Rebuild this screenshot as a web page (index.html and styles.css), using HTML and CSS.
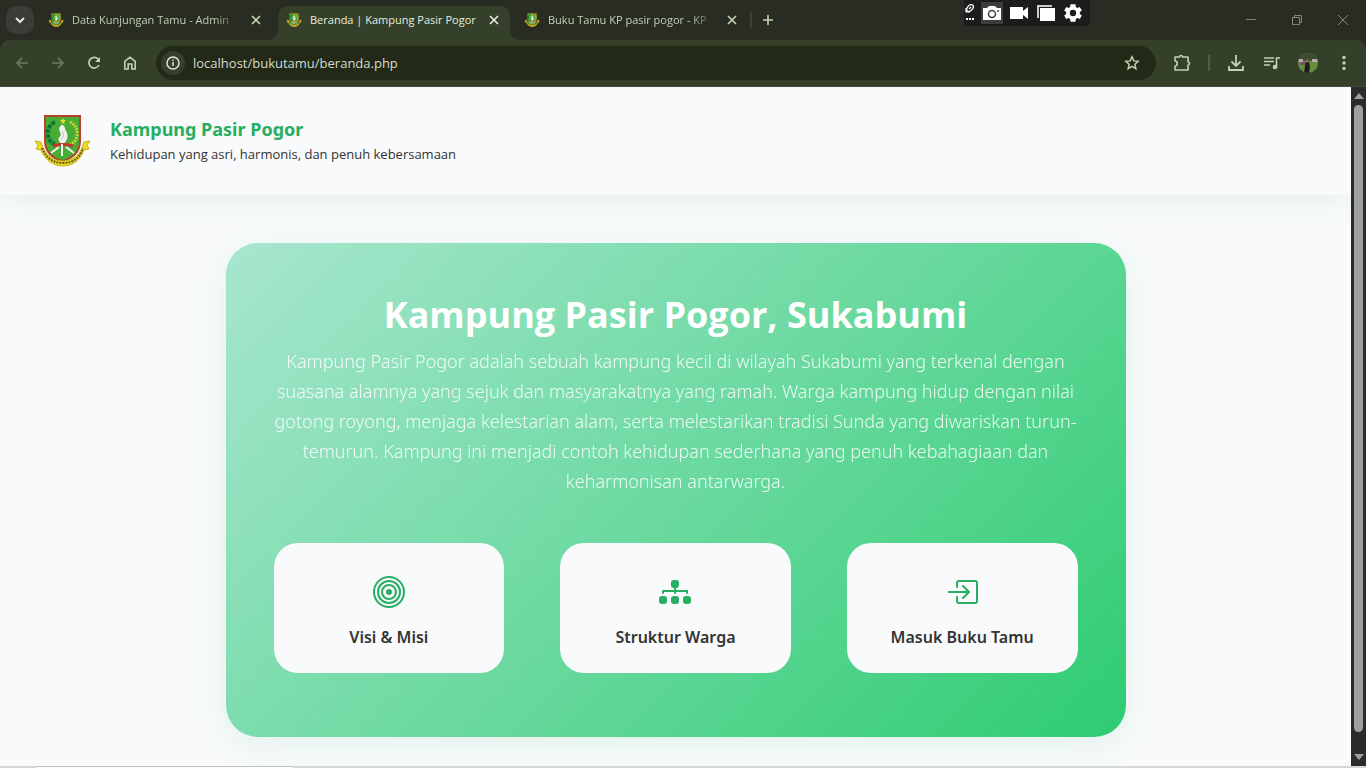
FILE: index.html
```
<!DOCTYPE html>
<html lang="id">
<head>
    <meta charset="UTF-8">
    <meta name="viewport" content="width=device-width, initial-scale=1.0">
    <title>Beranda | Kampung Pasir Pogor</title>
    <link rel="stylesheet" href="styles.css">
</head>
<body>
    <!-- shared emblem -->
    <svg class="sprite" width="0" height="0" aria-hidden="true">
        <symbol id="emblem" viewBox="0 0 60 60">
            <path d="M13 5h35v25c0 11-8 18-17.500 20C21 48 13 41 13 30z" fill="#49ac35" stroke="#b8402c" stroke-width="2"/>
            <path d="M23 11c-6 3-8 8-7 14 1 4 3 7 7 8" fill="none" stroke="#12733a" stroke-width="4" stroke-dasharray="4 1"/>
            <path d="M38 11c6 3 8 8 7 14-1 4-3 7-7 8" fill="none" stroke="#d8cf35" stroke-width="3" stroke-dasharray="2 1"/>
            <path d="M31 7l1 2h2l-2 2 1 2-2-1-2 1 1-2-2-2h2z" fill="#f4dd26"/>
            <path d="M30 14c3 1 2 4 4 7 2 4 1 8-2 11h-3c-2-2-3-4-1-6 2-2 1-3 0-6-1-2 0-5 2-6z" fill="#f2f2f2" stroke="#f2f2f2" stroke-width="1"/>
            <path d="M30 20c2 3 2 6-1 9" fill="none" stroke="#b7bdb7" stroke-width="1"/>
            <path d="M21 35c5-2 15-2 20 0" fill="none" stroke="#c4342b" stroke-width="3"/>
            <path d="M30 33v12M27 36l-8 6M34 36l8 6" stroke="#f4f4f4" stroke-width="2"/>
            <path d="M3 30l6 1c3 12 11 19 22 19s18-7 21-19l6-1-3 4 2 4-5 1c-4 10-11 16-21 16S13 49 9 39l-5-1 2-4z" fill="#f0dd1f" stroke="#c9ae1c" stroke-width="1"/>
            <path d="M10 37c4 10 11 15 21 15s17-5 20-15" fill="none" stroke="#61581a" stroke-width="2" stroke-dasharray="2 1"/>
        </symbol>
    </svg>

    <div class="tab-bar">
        <button class="tab-search" aria-label="Cari tab">
            <svg width="16" height="16" viewBox="0 0 16 16"><path d="M4 6l4 4 4-4" fill="none" stroke="#e4e9dc" stroke-width="2"/></svg>
        </button>
        <div class="tab">
            <svg class="tab-icon"><use href="#emblem"/></svg>
            <span class="tab-title">Data Kunjungan Tamu - Admin</span>
            <button class="tab-close" aria-label="Tutup"><svg width="10" height="10" viewBox="0 0 10 10"><path d="M1 1l8 8M9 1l-8 8" stroke="currentColor" stroke-width="1.700"/></svg></button>
        </div>
        <div class="tab active">
            <svg class="tab-icon"><use href="#emblem"/></svg>
            <span class="tab-title">Beranda | Kampung Pasir Pogor</span>
            <button class="tab-close" aria-label="Tutup"><svg width="10" height="10" viewBox="0 0 10 10"><path d="M1 1l8 8M9 1l-8 8" stroke="currentColor" stroke-width="1.700"/></svg></button>
        </div>
        <div class="tab">
            <svg class="tab-icon"><use href="#emblem"/></svg>
            <span class="tab-title">Buku Tamu KP pasir pogor - KP</span>
            <button class="tab-close" aria-label="Tutup"><svg width="10" height="10" viewBox="0 0 10 10"><path d="M1 1l8 8M9 1l-8 8" stroke="currentColor" stroke-width="1.700"/></svg></button>
        </div>
        <span class="tab-divider"></span>
        <button class="new-tab" aria-label="Tab baru"><svg width="12" height="12" viewBox="0 0 12 12"><path d="M6 1v10M1 6h10" stroke="currentColor" stroke-width="1.600"/></svg></button>

        <div class="window-controls">
            <button aria-label="Minimize"><svg width="12" height="12" viewBox="0 0 12 12"><path d="M1 5.500h10" stroke="currentColor"/></svg></button>
            <button aria-label="Restore"><svg width="12" height="12" viewBox="0 0 12 12"><path d="M1.500 3.500h7v7h-7zM3.500 3.500v-2h7v7h-2" fill="none" stroke="currentColor"/></svg></button>
            <button aria-label="Close"><svg width="12" height="12" viewBox="0 0 12 12"><path d="M1 1l10 10M11 1L1 11" stroke="currentColor"/></svg></button>
        </div>

        <div class="recorder">
            <svg width="12" height="20" viewBox="0 0 12 20"><ellipse cx="6" cy="5" rx="2.500" ry="4" transform="rotate(40 6 5)" fill="none" stroke="#fff" stroke-width="1.300"/><path d="M2 5v4h4M5 6l2-2" fill="none" stroke="#fff" stroke-width="1.200"/><path d="M2 15h2v2H2zM5 15h2v2H5zM8 15h2v2H8z" fill="#fff"/></svg>
            <button class="selected" aria-label="Kamera"><svg width="20" height="20" viewBox="0 0 20 20"><path d="M1 5h4l2-2h6l2 2h4v12H1z" fill="#fff"/><circle cx="10" cy="11" r="3.500" fill="#fff" stroke="#3d3d3d" stroke-width="1.500"/><circle cx="16" cy="8" r="1" fill="#3d3d3d"/></svg></button>
            <button aria-label="Video"><svg width="20" height="20" viewBox="0 0 20 20"><path d="M1 4h13v4l5-4v12l-5-4v4H1z" fill="#fff"/></svg></button>
            <button aria-label="Jendela"><svg width="20" height="20" viewBox="0 0 20 20"><path d="M2 15V3h14" fill="none" stroke="#ccc" stroke-width="2"/><path d="M4 5h15v13H4z" fill="#fff"/></svg></button>
            <button aria-label="Setelan"><svg width="22" height="22" viewBox="0 0 24 24"><path fill="#fff" d="M19.400 13a7.500 7.500 0 0 0 0-2l2.200-1.700-2.200-3.800-2.600 1a7.500 7.500 0 0 0-1.700-1L14.700 2.500H9.300l-.4 3a7.500 7.500 0 0 0-1.700 1l-2.600-1-2.200 3.800L4.600 11a7.500 7.500 0 0 0 0 2l-2.200 1.700 2.200 3.800 2.600-1a7.500 7.500 0 0 0 1.700 1l.4 3h5.400l.4-3a7.500 7.500 0 0 0 1.700-1l2.600 1 2.200-3.800zM12 15.500a3.500 3.500 0 1 1 0-7 3.500 3.500 0 0 1 0 7z"/></svg></button>
        </div>
    </div>

    <div class="toolbar-wrap">
        <div class="toolbar">
            <button class="disabled" aria-label="Kembali"><svg width="16" height="16" viewBox="0 0 16 16"><path d="M14 8H3M8 3L3 8l5 5" fill="none" stroke="currentColor" stroke-width="1.600"/></svg></button>
            <button class="disabled" aria-label="Maju"><svg width="16" height="16" viewBox="0 0 16 16"><path d="M2 8h11M8 3l5 5-5 5" fill="none" stroke="currentColor" stroke-width="1.600"/></svg></button>
            <button aria-label="Muat ulang"><svg width="16" height="16" viewBox="0 0 16 16"><path d="M13 10a5.300 5.300 0 1 1-1-6l1.500 1.500" fill="none" stroke="currentColor" stroke-width="1.700"/><path d="M14 2v5H9z" fill="currentColor"/></svg></button>
            <button aria-label="Beranda"><svg width="16" height="16" viewBox="0 0 16 16"><path d="M2.800 14V6.500L8 2.200l5.200 4.300V14H9.800V9H6.200v5z" fill="none" stroke="currentColor" stroke-width="1.600"/></svg></button>

            <div class="address">
                <button class="site-info" aria-label="Info situs"><svg width="16" height="16" viewBox="0 0 16 16"><circle cx="8" cy="8" r="6" fill="none" stroke="currentColor" stroke-width="1.500"/><path d="M8 7v4M8 4.500V6" stroke="currentColor" stroke-width="1.500"/></svg></button>
                <input type="text" value="localhost/bukutamu/beranda.php" aria-label="Alamat">
                <button aria-label="Bookmark"><svg width="16" height="16" viewBox="0 0 16 16"><path d="M8 1.800l1.800 4.100 4.500.4-3.400 3 1 4.400L8 11.400l-3.900 2.300 1-4.400-3.400-3 4.500-.4z" fill="none" stroke="currentColor" stroke-width="1.500"/></svg></button>
            </div>

            <div class="actions">
                <button aria-label="Ekstensi"><svg width="18" height="18" viewBox="0 0 18 18"><path d="M2 3h4.500a1.500 1.500 0 0 1 3 0H15v5a1.500 1.500 0 0 1 0 3v5H2v-4c3 0 3-5 0-5z" fill="none" stroke="currentColor" stroke-width="1.600" stroke-linejoin="round"/></svg></button>
                <span class="toolbar-divider"></span>
                <button aria-label="Unduhan"><svg width="18" height="18" viewBox="0 0 18 18"><path d="M9 1v11M4.500 7.500L9 12l4.500-4.500M2 12v4h14v-4" fill="none" stroke="currentColor" stroke-width="1.800"/></svg></button>
                <button aria-label="Kontrol media"><svg width="16" height="16" viewBox="0 0 16 16"><path d="M0 3h10M0 6.500h10M0 10h6M12.500 12V3H16" fill="none" stroke="currentColor" stroke-width="1.600"/><circle cx="11" cy="12" r="2.300" fill="currentColor"/></svg></button>
                <button aria-label="Profil">
                    <svg width="20" height="20" viewBox="0 0 20 20">
                        <clipPath id="round"><circle cx="10" cy="10" r="10"/></clipPath>
                        <g clip-path="url(#round)">
                            <path d="M0 0h20v20H0z" fill="#68903c"/>
                            <path d="M0 0h20v8H0z" fill="#3e4b30"/>
                            <path d="M0 6h5v3H0zM14 6h6v3h-6z" fill="#b5adad"/>
                            <path d="M2 9h6v3H2z" fill="#705760"/>
                            <path d="M8 8l3 1 1 5-1 6H6l1-7z" fill="#211a20"/>
                            <circle cx="9" cy="8" r="1.500" fill="#a2715d"/>
                        </g>
                    </svg>
                </button>
                <button aria-label="Menu"><svg width="16" height="16" viewBox="0 0 16 16" fill="currentColor"><circle cx="8" cy="2.500" r="1.700"/><circle cx="8" cy="8" r="1.700"/><circle cx="8" cy="13.500" r="1.700"/></svg></button>
            </div>
        </div>
    </div>

    <div class="viewport">
        <div class="page">
            <header class="site-header">
                <svg class="logo" role="img" aria-label="Logo"><use href="#emblem"/></svg>
                <div>
                    <div class="site-name">Kampung Pasir Pogor</div>
                    <div class="site-tagline">Kehidupan yang asri, harmonis, dan penuh kebersamaan</div>
                </div>
            </header>

            <main class="hero">
                <h1>Kampung Pasir Pogor, Sukabumi</h1>
                <p>Kampung Pasir Pogor adalah sebuah kampung kecil di wilayah Sukabumi yang terkenal dengan suasana alamnya yang sejuk dan masyarakatnya yang ramah. Warga kampung hidup dengan nilai gotong royong, menjaga kelestarian alam, serta melestarikan tradisi Sunda yang diwariskan turun-temurun. Kampung ini menjadi contoh kehidupan sederhana yang penuh kebahagiaan dan keharmonisan antarwarga.</p>
                <nav class="menu">
                    <a class="menu-card" href="#visi">
                        <svg viewBox="0 0 16 16" fill="none" stroke="currentColor"><circle cx="8" cy="8" r="7.500"/><circle cx="8" cy="8" r="5.500"/><circle cx="8" cy="8" r="3.500"/><circle cx="8" cy="8" r="1.500" fill="currentColor" stroke="none"/></svg>
                        <span>Visi &amp; Misi</span>
                    </a>
                    <a class="menu-card" href="#struktur">
                        <svg viewBox="0 0 16 16" fill="currentColor"><path d="M6 3.500A1.500 1.500 0 0 1 7.500 2h1A1.500 1.500 0 0 1 10 3.500v1A1.500 1.500 0 0 1 8.500 6v1H14a.5.5 0 0 1 .5.5v1a.5.5 0 0 1-1 0V8h-5v.5a.5.5 0 0 1-1 0V8h-5v.5a.5.5 0 0 1-1 0v-1A.5.5 0 0 1 2 7h5.500V6A1.500 1.500 0 0 1 6 4.500z"/><rect y="10" width="4" height="4" rx="1.500"/><rect x="6" y="10" width="4" height="4" rx="1.500"/><rect x="12" y="10" width="4" height="4" rx="1.500"/></svg>
                        <span>Struktur Warga</span>
                    </a>
                    <a class="menu-card" href="#bukutamu">
                        <svg viewBox="0 0 16 16" fill="currentColor"><path d="M6 3.500a.5.5 0 0 1 .5-.5h8a.5.5 0 0 1 .5.5v9a.5.5 0 0 1-.5.5h-8a.5.5 0 0 1-.5-.5v-2a.5.5 0 0 0-1 0v2A1.500 1.500 0 0 0 6.500 14h8a1.500 1.500 0 0 0 1.500-1.500v-9A1.500 1.500 0 0 0 14.500 2h-8A1.500 1.500 0 0 0 5 3.500v2a.5.5 0 0 0 1 0z"/><path d="M11.854 8.354a.5.5 0 0 0 0-.708l-3-3a.5.5 0 1 0-.708.708L10.293 7.500H1.500a.5.5 0 0 0 0 1h8.793l-2.147 2.146a.5.5 0 0 0 .708.708z"/></svg>
                        <span>Masuk Buku Tamu</span>
                    </a>
                </nav>
            </main>
        </div>
        <div class="scrollbar">
            <svg width="10" height="6" viewBox="0 0 10 6"><path d="M5 0l5 6H0z" fill="#9f9f9f"/></svg>
            <div class="thumb"></div>
            <svg width="10" height="6" viewBox="0 0 10 6"><path d="M0 0h10L5 6z" fill="#9f9f9f"/></svg>
        </div>
    </div>
    <div class="taskbar-edge"><div></div></div>
</body>
</html>
```
FILE: styles.css
```
:root {
    --frame: #282c23;
    --toolbar: #35402b;
    --address: #222916;
    --icon: #c3d1b3;
    --page: #f8fafc;
    --green: #27ae60;
}

* {
    box-sizing: border-box;
}

body {
    margin: 0;
    height: 100vh;
    display: flex;
    flex-direction: column;
    overflow: hidden;
    background: var(--page);
    color: #333;
    font-family: "Open Sans", "Noto Sans", sans-serif;
}

button {
    display: flex;
    align-items: center;
    justify-content: center;
    flex: none;
    padding: 0;
    border: 0;
    background: none;
    color: var(--icon);
}

.sprite {
    position: absolute;
}

/* tab bar */
.tab-bar {
    position: relative;
    flex: none;
    height: 40px;
    display: flex;
    align-items: center;
    gap: 6px;
    padding-left: 6px;
    background: var(--frame);
}

.tab-search {
    width: 28px;
    height: 28px;
    border-radius: 10px;
    background: #3a3d37;
}

.tab {
    position: relative;
    display: flex;
    align-items: center;
    gap: 8px;
    width: 232px;
    height: 34px;
    padding: 0 8px 6px;
    align-self: flex-end;
    border-radius: 10px 10px 0 0;
    color: var(--icon);
}

.tab.active {
    background: var(--toolbar);
    color: #e6ecdd;
}

.tab.active::before,
.tab.active::after {
    content: "";
    position: absolute;
    bottom: 0;
    width: 10px;
    height: 10px;
}

.tab.active::before {
    left: -10px;
    background: radial-gradient(circle at 0 0, transparent 10px, var(--toolbar) 10px);
}

.tab.active::after {
    right: -10px;
    background: radial-gradient(circle at 100% 0, transparent 10px, var(--toolbar) 10px);
}

.tab-icon {
    flex: none;
    width: 16px;
    height: 16px;
}

.tab-title {
    flex: 1;
    overflow: hidden;
    white-space: nowrap;
    font-size: 11px;
    line-height: 16px;
    -webkit-mask-image: linear-gradient(to right, #000 85%, transparent);
    mask-image: linear-gradient(to right, #000 85%, transparent);
}

.tab.active .tab-title {
    -webkit-mask-image: none;
    mask-image: none;
}

.tab-close {
    width: 16px;
    height: 16px;
    color: inherit;
}

.tab-divider {
    width: 2px;
    height: 16px;
    margin-left: -4px;
    background: #3c4137;
}

.new-tab {
    width: 28px;
    height: 28px;
    margin-left: -4px;
}

.window-controls {
    display: flex;
    margin-left: auto;
}

.window-controls button {
    width: 46px;
    height: 40px;
    color: #83867f;
}

.recorder {
    position: absolute;
    top: 0;
    left: 964px;
    height: 26px;
    display: flex;
    align-items: center;
    gap: 5px;
    padding: 0 6px 0 0;
    border-radius: 0 0 4px 4px;
    background: #1c1c1c;
}

.recorder button {
    width: 22px;
    height: 22px;
}

.recorder .selected {
    background: #3d3d3d;
}

/* toolbar */
.toolbar-wrap {
    flex: none;
    background: var(--frame);
}

.toolbar {
    display: flex;
    align-items: center;
    gap: 8px;
    height: 47px;
    padding: 0 8px;
    border-bottom: 1px solid #474c41;
    border-radius: 10px 10px 0 0;
    background: var(--toolbar);
}

.toolbar button {
    width: 28px;
    height: 28px;
}

.toolbar .disabled {
    color: #6f7965;
}

.address {
    flex: 1;
    display: flex;
    align-items: center;
    height: 34px;
    margin: 0 4px;
    padding: 0 10px 0 5px;
    border-radius: 17px;
    background: var(--address);
}

.address .site-info {
    width: 24px;
    height: 24px;
    border-radius: 50%;
    background: var(--toolbar);
    color: #dfe5d8;
}

.address input {
    flex: 1;
    min-width: 0;
    padding: 0;
    margin-left: 8px;
    border: 0;
    outline: 0;
    background: none;
    color: #d5dbcd;
    font: 13px/20px "Open Sans", "Noto Sans", sans-serif;
}

.actions {
    display: flex;
    align-items: center;
    gap: 8px;
}

.toolbar-divider {
    width: 2px;
    height: 16px;
    margin: 0 4px;
    background: #525d46;
}

/* page */
.viewport {
    flex: 1;
    min-height: 0;
    display: flex;
}

.page {
    flex: 1;
    overflow: hidden;
}

.scrollbar {
    flex: none;
    display: flex;
    flex-direction: column;
    align-items: center;
    gap: 6px;
    width: 15px;
    padding: 6px 0;
    background: #2b2b2b;
}

.thumb {
    flex: 1;
    width: 9px;
    margin-bottom: 16px;
    border-radius: 5px;
    background: #9f9f9f;
}

.site-header {
    display: flex;
    align-items: center;
    gap: 18px;
    padding: 24px 32px;
    background: var(--page);
    box-shadow: 0 4px 24px rgba(39, 174, 96, 0.1);
}

.logo {
    flex: none;
    width: 60px;
    height: 60px;
}

.site-name {
    color: var(--green);
    font-family: "Noto Sans", "Open Sans", sans-serif;
    font-size: 18px;
    line-height: 26px;
    font-weight: 700;
}

.site-tagline {
    font-size: 13px;
    line-height: 24px;
}

.hero {
    max-width: 900px;
    margin: 48px auto;
    padding: 48px 32px 64px;
    border-radius: 32px;
    background:
        radial-gradient(circle, rgba(255, 255, 255, 0.07) 1px, transparent 1px) 0 0 / 20px 20px,
        linear-gradient(135deg, #a8e6cf 0%, #2ecc71 100%);
    box-shadow: 0 8px 32px rgba(39, 174, 96, 0.1);
    color: #fff;
    text-align: center;
}

.hero h1 {
    margin: 0 0 7px;
    font-size: 36px;
    line-height: 48px;
    font-weight: 700;
}

.hero p {
    margin: 0 0 47px;
    font-family: "Noto Sans", "Open Sans", sans-serif;
    font-size: 18px;
    line-height: 30px;
    font-weight: 300;
    opacity: 0.85;
}

.menu {
    display: grid;
    grid-template-columns: repeat(3, 1fr);
    gap: 56px;
    padding: 0 16px;
}

.menu-card {
    display: flex;
    flex-direction: column;
    align-items: center;
    gap: 16px;
    padding: 33px 16px 23px;
    border-radius: 24px;
    background: var(--page);
    color: #333;
    font-family: "Noto Sans", "Open Sans", sans-serif;
    font-size: 16px;
    line-height: 26px;
    font-weight: 600;
    text-decoration: none;
}

.menu-card svg {
    width: 32px;
    height: 32px;
    color: var(--green);
}

/* sliver of the window underneath */
.taskbar-edge {
    flex: none;
    height: 2px;
    padding-left: 37px;
    background: #d6d6d6;
}

.taskbar-edge div {
    width: 256px;
    height: 2px;
    border-top: 1px solid #bdbdbd;
    background: #fff;
}
```
